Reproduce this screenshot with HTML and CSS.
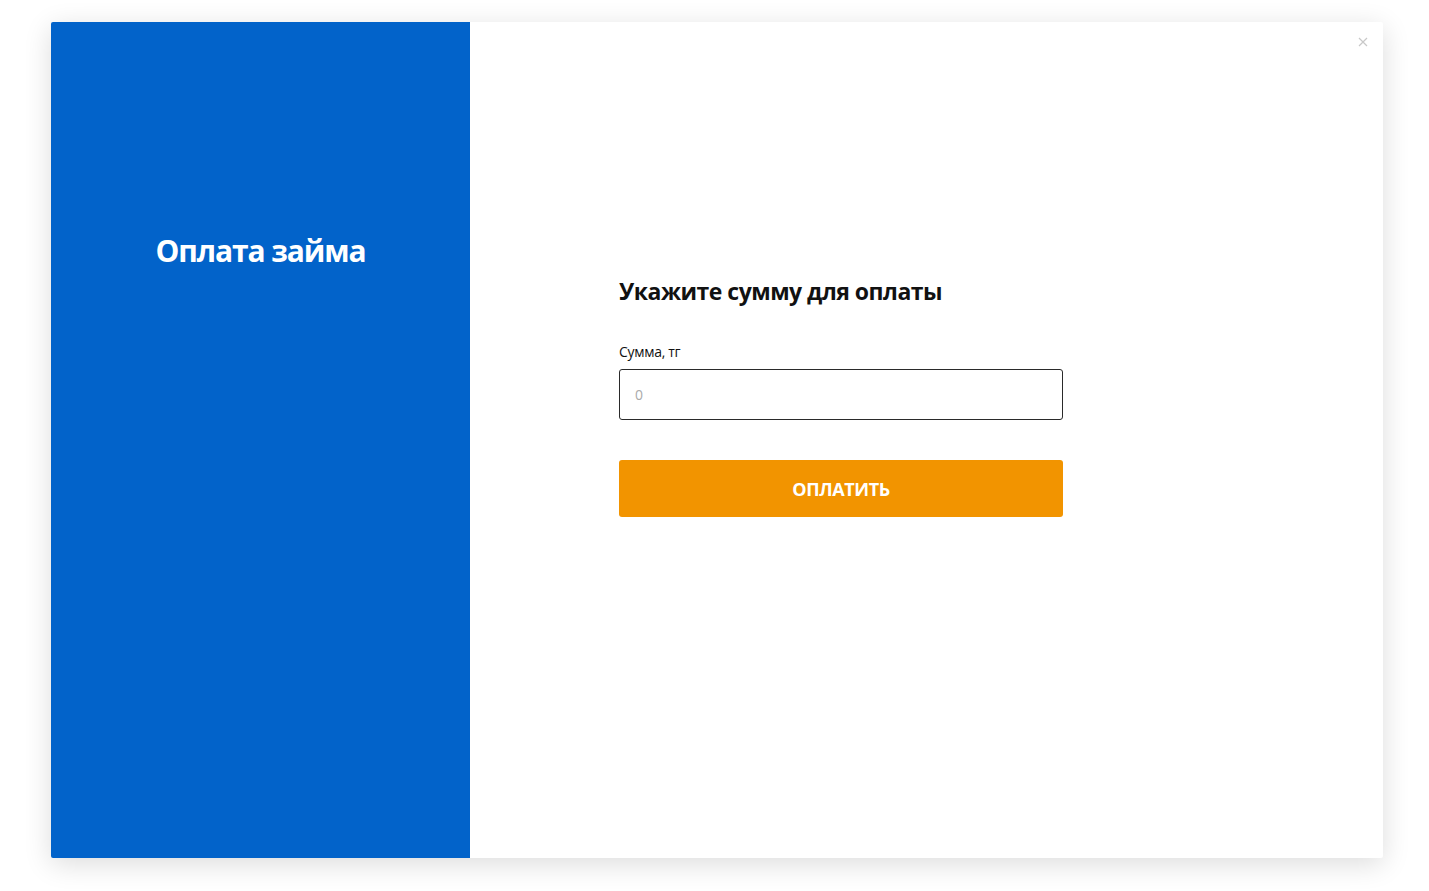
FILE: index.html
```html
<!DOCTYPE html>
<html lang="ru">
<head>
    <meta charset="UTF-8">
    <meta name="viewport" content="width=device-width, initial-scale=1.0">
    <title>Оплата займа</title>
    <link rel="stylesheet" href="styles.css">
</head>
<body>
    <div class="modal">
        <div class="modal-side">
            <h1>Оплата займа</h1>
        </div>
        <div class="modal-main">
            <button class="close" type="button" aria-label="Закрыть">
                <svg width="10" height="10" viewBox="0 0 10 10">
                    <path d="M1 1L9 9M9 1L1 9" stroke="#c8c8c8" stroke-width="1.2" fill="none"/>
                </svg>
            </button>
            <form class="pay-form" onsubmit="return false">
                <h2>Укажите сумму для оплаты</h2>
                <label for="amount">Сумма, тг</label>
                <input type="text" id="amount" placeholder="0">
                <button class="pay" type="submit">ОПЛАТИТЬ</button>
            </form>
        </div>
    </div>
</body>
</html>
```

FILE: styles.css
```css
body {
    margin: 0;
    padding: 22px 0 33px 51px;
    background: #fff;
    font-family: "Open Sans", "Noto Sans", sans-serif;
    color: #111;
}
.modal {
    display: flex;
    width: 1332px;
    height: 836px;
    border-radius: 2px;
    box-shadow: 0 6px 28px rgba(0, 0, 0, 0.14);
    overflow: hidden;
    background: #fff;
}
.modal-side {
    width: 419px;
    flex-shrink: 0;
    background: #0263ca;
    padding-top: 208px;
    box-sizing: border-box;
}
.modal-side h1 {
    margin: 0;
    text-align: center;
    color: #fff;
    font-size: 30px;
    font-weight: 700;
    letter-spacing: -1.1px;
}
.modal-main {
    position: relative;
    flex: 1;
    padding: 253px 0 0 149px;
    box-sizing: border-box;
}
.close {
    position: absolute;
    top: 13px;
    right: 15px;
    border: none;
    background: none;
    padding: 0;
    cursor: pointer;
}
.pay-form {
    display: flex;
    flex-direction: column;
    width: 444px;
}
.pay-form h2 {
    margin: 0 0 35px;
    font-size: 23px;
    font-weight: 700;
    letter-spacing: -0.5px;
}
.pay-form label {
    font-size: 14px;
    margin-bottom: 8px;
    letter-spacing: -0.3px;
}
.pay-form input {
    height: 51px;
    border: 1px solid #2a2a2a;
    border-radius: 3px;
    padding: 0 15px;
    font-size: 14px;
    font-family: inherit;
    box-sizing: border-box;
}
.pay-form input::placeholder {
    color: #aaa;
}
.pay {
    margin-top: 40px;
    height: 57px;
    border: none;
    border-radius: 3px;
    background: #f29400;
    color: #fff;
    font-family: inherit;
    font-size: 18px;
    font-weight: 700;
    letter-spacing: -0.4px;
    cursor: pointer;
}
```
